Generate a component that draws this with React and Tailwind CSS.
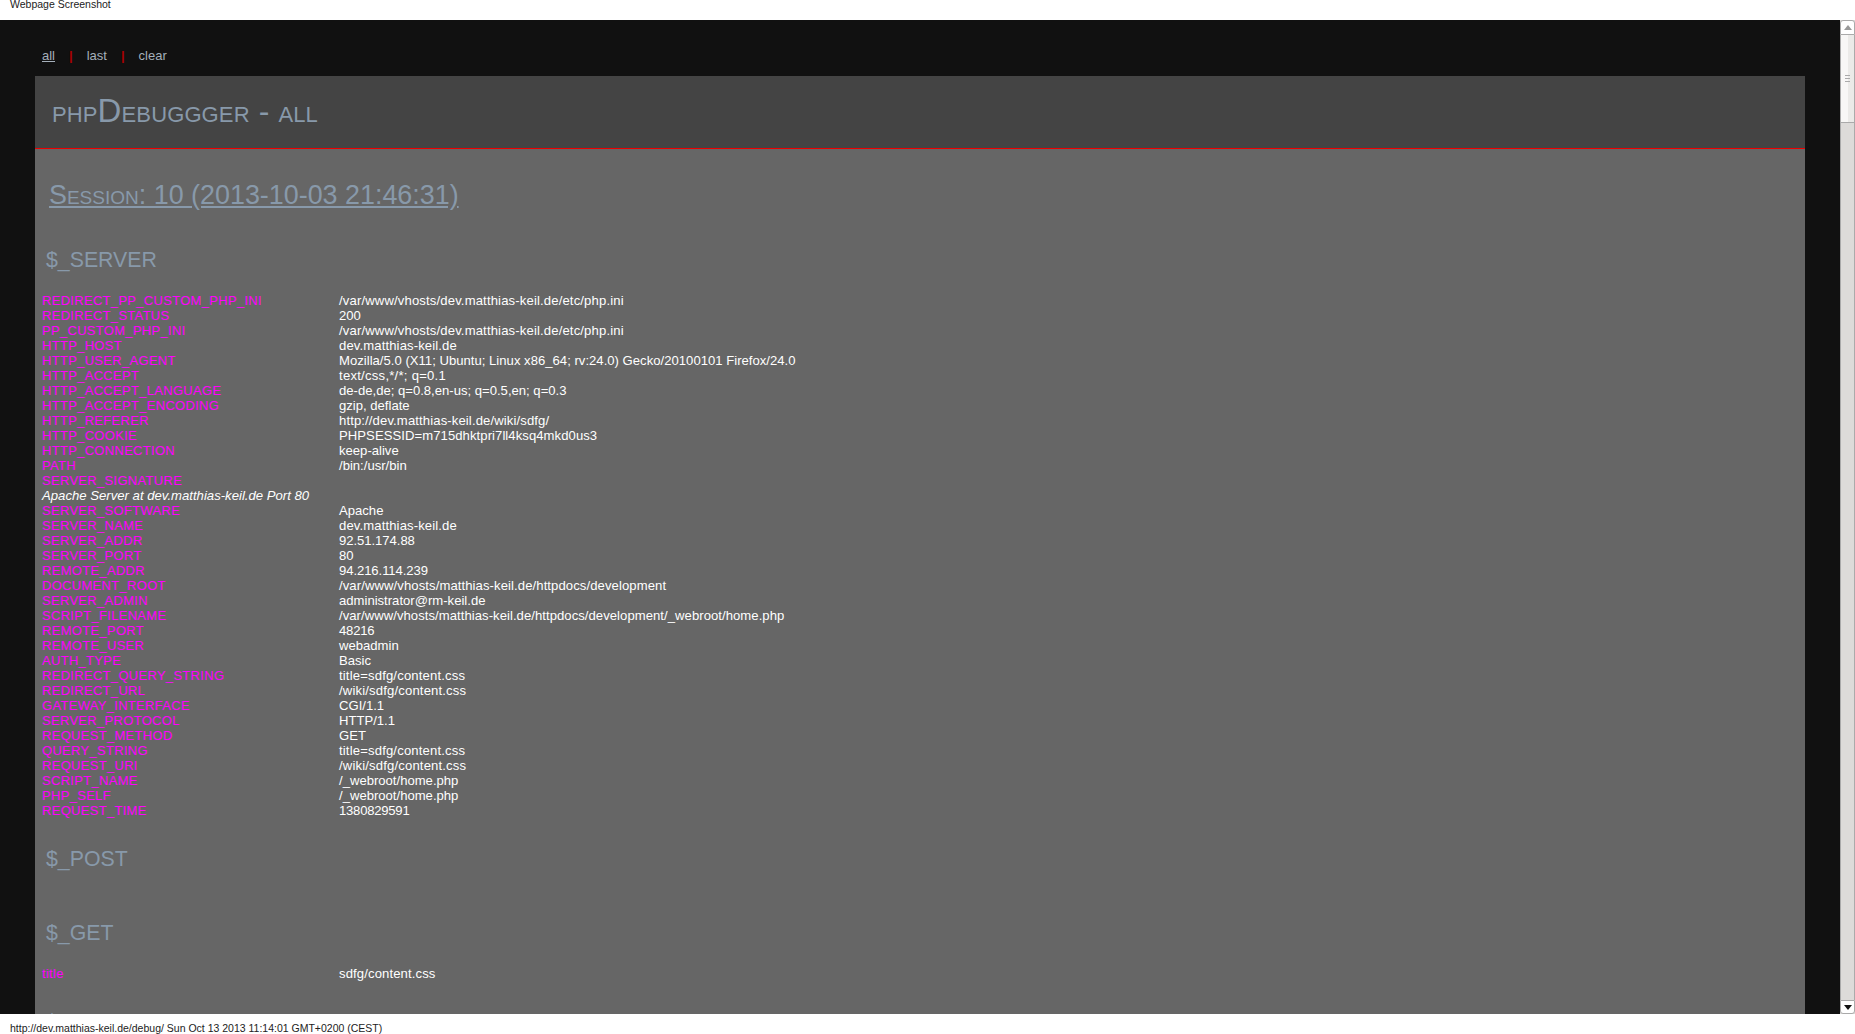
const rows = [
  ["REDIRECT_PP_CUSTOM_PHP_INI", "/var/www/vhosts/dev.matthias-keil.de/etc/php.ini", "tracking-[0.145px]"],
  ["REDIRECT_STATUS", "200"],
  ["PP_CUSTOM_PHP_INI", "/var/www/vhosts/dev.matthias-keil.de/etc/php.ini", "tracking-[0.145px]"],
  ["HTTP_HOST", "dev.matthias-keil.de", "tracking-[0.12px]"],
  ["HTTP_USER_AGENT", "Mozilla/5.0 (X11; Ubuntu; Linux x86_64; rv:24.0) Gecko/20100101 Firefox/24.0", "tracking-[0.015px]"],
  ["HTTP_ACCEPT", "text/css,*/*; q=0.1", "tracking-[0.25px]"],
  ["HTTP_ACCEPT_LANGUAGE", "de-de,de; q=0.8,en-us; q=0.5,en; q=0.3"],
  ["HTTP_ACCEPT_ENCODING", "gzip, deflate"],
  ["HTTP_REFERER", "http://dev.matthias-keil.de/wiki/sdfg/", "tracking-[0.12px]"],
  ["HTTP_COOKIE", "PHPSESSID=m715dhktpri7ll4ksq4mkd0us3", "tracking-[0.066px]"],
  ["HTTP_CONNECTION", "keep-alive"],
  ["PATH", "/bin:/usr/bin"],
  ["SERVER_SIGNATURE", ""],
  ["SERVER_SOFTWARE", "Apache"],
  ["SERVER_NAME", "dev.matthias-keil.de", "tracking-[0.12px]"],
  ["SERVER_ADDR", "92.51.174.88", "-tracking-[0.05px]"],
  ["SERVER_PORT", "80"],
  ["REMOTE_ADDR", "94.216.114.239", "-tracking-[0.08px]"],
  ["DOCUMENT_ROOT", "/var/www/vhosts/matthias-keil.de/httpdocs/development", "tracking-[0.09px]"],
  ["SERVER_ADMIN", "administrator@rm-keil.de"],
  ["SCRIPT_FILENAME", "/var/www/vhosts/matthias-keil.de/httpdocs/development/_webroot/home.php", "tracking-[0.05px]"],
  ["REMOTE_PORT", "48216", "-tracking-[0.2px]"],
  ["REMOTE_USER", "webadmin"],
  ["AUTH_TYPE", "Basic"],
  ["REDIRECT_QUERY_STRING", "title=sdfg/content.css", "tracking-[0.16px]"],
  ["REDIRECT_URL", "/wiki/sdfg/content.css", "tracking-[0.16px]"],
  ["GATEWAY_INTERFACE", "CGI/1.1"],
  ["SERVER_PROTOCOL", "HTTP/1.1"],
  ["REQUEST_METHOD", "GET"],
  ["QUERY_STRING", "title=sdfg/content.css", "tracking-[0.16px]"],
  ["REQUEST_URI", "/wiki/sdfg/content.css", "tracking-[0.16px]"],
  ["SCRIPT_NAME", "/_webroot/home.php"],
  ["PHP_SELF", "/_webroot/home.php"],
  ["REQUEST_TIME", "1380829591", "-tracking-[0.24px]"],
];

function Row({ k, v, track = "" }) {
  return (
    <div className="flex h-[15px] leading-[15px]">
      <div className="w-[297px] shrink-0 text-[13px] tracking-[0.3px] text-[#ff00ff]">{k}</div>
      <div className={"text-[13.1px] text-white " + track}>{v}</div>
    </div>
  );
}

function Heading({ children, className }) {
  return <h2 className={"pl-[4px] text-[21.3px] leading-[24px] text-[#8899aa] " + className}>{children}</h2>;
}

export default function App() {
  return (
    <div className="flex h-screen flex-col overflow-hidden bg-white font-['Liberation_Sans',Arial,sans-serif] text-[13px]">
      <div className="h-5 shrink-0 pl-[10px] text-[10.5px] leading-[9px] text-[#222]">Webpage Screenshot</div>
      <div className="flex min-h-0 flex-1">
        <main className="min-w-0 flex-1 overflow-hidden bg-[#111111] px-[35px] pt-7">
          <nav className="flex h-[28px] items-start pl-[7px] leading-[15px] text-[#a5b0bb]">
            <a className="underline">all</a>
            <span className="mx-[14px] font-bold text-[#aa0000]">|</span>
            <a>last</a>
            <span className="mx-[14px] font-bold text-[#aa0000]">|</span>
            <a>clear</a>
          </nav>
          <header className="h-[73px] border-b border-[#ee0000] bg-[#444444] pl-[17px] pt-[17px] text-[32px] leading-[36px] tracking-[0.12px] text-[#8899aa] [font-variant:small-caps]">
            php<span className="text-[33px]">D</span>ebuggger - all
          </header>
          <section className="h-[2000px] bg-[#666666] pl-[7px] pt-[28px]">
            <h1 className="pl-[7px] text-[26.9px] leading-[36px] text-[#8899aa] underline [font-variant:small-caps]">
              Session: 10 (2013-10-03 21:46:31)
            </h1>
            <Heading className="mt-[35px] mb-[21px]">$_SERVER</Heading>
            <div>
              {rows.map(([k, v, track]) =>
                k === "SERVER_SIGNATURE" ? (
                  <div key={k}>
                    <Row k={k} v="" />
                    <div className="h-[15px] text-[13.15px] leading-[15px] text-white italic">Apache Server at dev.matthias-keil.de Port 80</div>
                  </div>
                ) : (
                  <Row key={k} k={k} v={v} track={track} />
                )
              )}
            </div>
            <Heading className="mt-[29px] mb-[50px]">$_POST</Heading>
            <Heading className="mb-[21px]">$_GET</Heading>
            <Row k="title" v="sdfg/content.css" track="tracking-[0.12px]" />
            <Heading className="mt-[29px]">$_COOKIE</Heading>
          </section>
        </main>
        <aside className="flex w-[15px] shrink-0 flex-col bg-[#dddbd9]">
          <div className="flex h-[15px] shrink-0 items-center justify-center rounded-t-[3px] border border-[#aaa] bg-white">
            <svg width="8" height="5" viewBox="0 0 8 5"><path d="M4 0 8 5H0z" fill="#999" /></svg>
          </div>
          <div className="flex h-[88px] shrink-0 flex-col items-center justify-center gap-[2px] border border-[#aaa] border-t-0 bg-[linear-gradient(90deg,#f8f7f6_0,#f8f7f6_50%,#ebeae8_50%)]">
            <div className="h-px w-[5px] bg-[#aaa]" />
            <div className="h-px w-[5px] bg-[#aaa]" />
            <div className="h-px w-[5px] bg-[#aaa]" />
          </div>
          <div className="flex-1 border-x border-[#aaa]" />
          <div className="flex h-[14px] shrink-0 items-center justify-center rounded-b-[3px] border border-[#aaa] bg-white">
            <svg width="8" height="5" viewBox="0 0 8 5"><path d="M0 0H8L4 5z" fill="#111" /></svg>
          </div>
        </aside>
      </div>
      <div className="h-5 shrink-0 pl-[10px] pt-[9px] text-[10.5px] leading-[10px] text-[#222]">
        http://dev.matthias-keil.de/debug/ Sun Oct 13 2013 11:14:01 GMT+0200 (CEST)
      </div>
    </div>
  );
}
